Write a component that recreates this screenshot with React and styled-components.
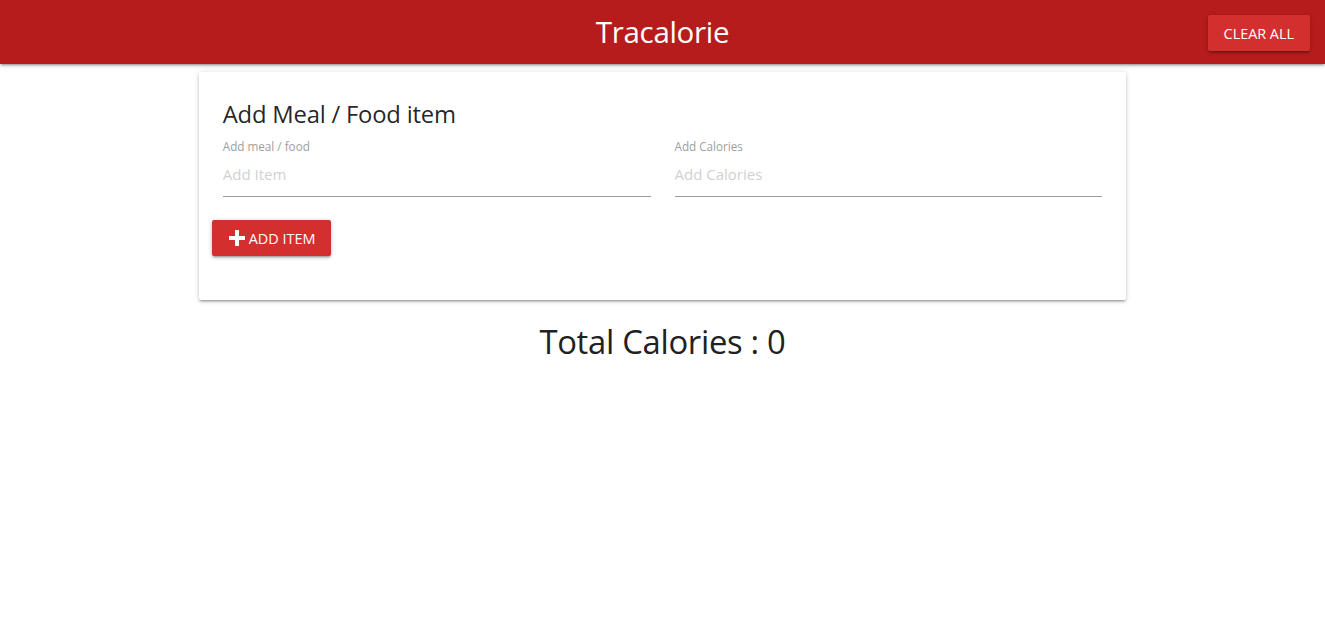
import React from "react";
import styled, { createGlobalStyle } from "styled-components";

const Global = createGlobalStyle`
  html, body { margin: 0; padding: 0; background: #fff; }
  body { font-family: "Open Sans", "Noto Sans", sans-serif; color: rgba(0,0,0,0.87); }
  * { box-sizing: border-box; }
`;

const Nav = styled.nav`
  position: relative;
  height: 64px;
  background: #b71c1c;
  display: flex;
  align-items: center;
  justify-content: center;
  box-shadow: 0 2px 2px 0 rgba(0,0,0,0.14), 0 3px 1px -2px rgba(0,0,0,0.12), 0 1px 5px 0 rgba(0,0,0,0.2);
`;

const Brand = styled.div`
  color: #fff;
  font-size: 29.5px;
  line-height: 64px;
  letter-spacing: -0.3px;
`;

const NavRight = styled.div`
  position: absolute;
  right: 15px;
  top: 15px;
`;

const Btn = styled.button`
  display: inline-flex;
  align-items: center;
  gap: 3px;
  height: 36px;
  padding: 0 ${p => p.$px || 16}px;
  border: none;
  border-radius: 2px;
  background: #d32f2f;
  color: #fff;
  font-family: inherit;
  font-size: 14.4px;
  text-transform: uppercase;
  letter-spacing: 0;
  cursor: pointer;
  box-shadow: 0 2px 2px 0 rgba(0,0,0,0.14), 0 3px 1px -2px rgba(0,0,0,0.12), 0 1px 5px 0 rgba(0,0,0,0.2);
`;

const Container = styled.div`
  width: 70%;
  margin: 0 auto;
`;

const Card = styled.div`
  margin: 8px 0 16px;
  background: #fff;
  border-radius: 2px;
  padding: 26px 24px 44px;
  box-shadow: 0 2px 2px 0 rgba(0,0,0,0.14), 0 3px 1px -2px rgba(0,0,0,0.12), 0 1px 5px 0 rgba(0,0,0,0.2);
`;

const CardTitle = styled.div`
  font-size: 23.8px;
  line-height: 32px;
  color: rgba(0,0,0,0.87);
  margin-bottom: 9px;
  letter-spacing: -0.2px;
`;

const Row = styled.div`
  display: grid;
  grid-template-columns: 1fr 1fr;
  column-gap: 24px;
  margin-bottom: 23px;
`;

const Field = styled.div`
  display: flex;
  flex-direction: column;
`;

const Label = styled.label`
  font-size: 11.7px;
  color: #9e9e9e;
  line-height: 14px;
`;

const Input = styled.input`
  height: 44px;
  border: none;
  border-bottom: 1px solid #9e9e9e;
  outline: none;
  padding: 0 0 2px;
  font-family: inherit;
  font-size: 15px;
  color: rgba(0,0,0,0.87);
  background: transparent;
  &::placeholder { color: #d1d1d1; }
`;

const AddWrap = styled.div`
  margin-left: -11px;
`;

const Total = styled.h3`
  margin: 20px 0 0;
  text-align: center;
  font-weight: 400;
  font-size: 32.8px;
  line-height: 44px;
  color: #212121;
  letter-spacing: -0.3px;
`;

const PlusIcon = () => (
  <svg width="18" height="18" viewBox="0 0 18 18">
    <path d="M7 1h4v6h6v4h-6v6H7v-6H1V7h6z" fill="#fff" />
  </svg>
);

export default function App() {
  return (
    <>
      <Global />
      <Nav>
        <Brand>Tracalorie</Brand>
        <NavRight>
          <Btn>Clear All</Btn>
        </NavRight>
      </Nav>
      <Container>
        <Card>
          <CardTitle>Add Meal / Food item</CardTitle>
          <Row>
            <Field>
              <Label>Add meal / food</Label>
              <Input placeholder="Add Item" />
            </Field>
            <Field>
              <Label>Add Calories</Label>
              <Input placeholder="Add Calories" />
            </Field>
          </Row>
          <AddWrap>
            <Btn $px={16}><PlusIcon />Add Item</Btn>
          </AddWrap>
        </Card>
        <Total>Total Calories : 0</Total>
      </Container>
    </>
  );
}
